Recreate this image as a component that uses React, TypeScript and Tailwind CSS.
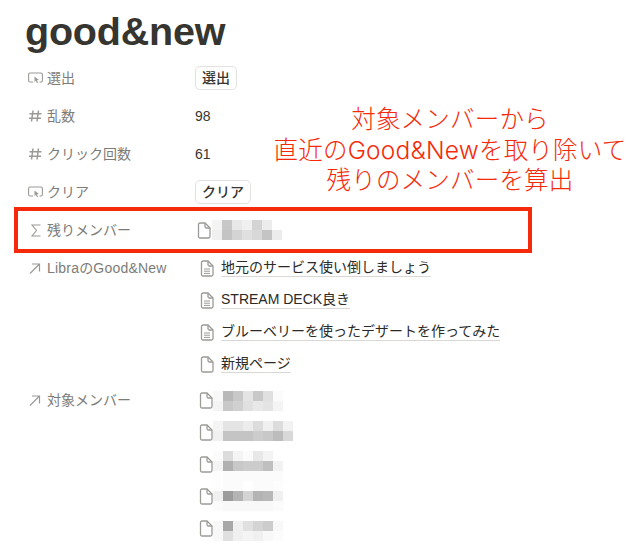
import { ReactNode } from 'react';

const FONT = "font-['Liberation_Sans','Noto_Sans_CJK_JP',sans-serif]";

// mosaic data: grey level per 10px cell, as seen in the screenshot
const remaining = [
  ['f4', 'c8', 'e8', 'f0', 'd4', 'ec', 'ff'],
  ['f0', 'c4', 'd4', 'e0', 'd8', 'c4', 'ec'],
];
const members = [
  {
    shift: 'translate-y-[1px]',
    cells: [
      ['f8', 'b8', 'c8', 'e4', 'c8', 'e0', 'fb'],
      ['f4', 'c8', 'd0', 'e0', 'e8', 'e4', 'f4'],
    ],
  },
  {
    shift: '-translate-y-[1px]',
    cells: [
      ['f4', 'e4', 'e4', 'ec', 'dc', 'f0', 'dc', 'f2'],
      ['f0', 'c4', 'c4', 'c4', 'cc', 'c8', 'bc', 'd8'],
    ],
  },
  {
    shift: 'translate-y-[2px]',
    cells: [
      ['fb', 'dc', 'f4', 'fb', 'e8', 'f4', 'ff'],
      ['f4', 'b0', 'c8', 'cc', 'cc', 'c0', 'f2'],
      ['fd', 'fb', 'fb', 'fb', 'fb', 'fb', 'fb'],
    ],
  },
  {
    shift: '',
    cells: [
      ['fd', 'fb', 'fb', 'ff', 'fb', 'fb', 'fd'],
      ['f0', '9c', 'b4', 'd4', 'b4', 'b8', 'f0'],
      ['fb', 'f8', 'f8', 'f8', 'f8', 'f8', 'fb'],
    ],
  },
  {
    shift: 'translate-y-[3px]',
    cells: [
      ['f8', 'a8', 'f0', 'e0', 'd4', 'cc', 'f8'],
      ['f8', 'e0', 'f0', 'f4', 'f0', 'f8', 'fc'],
    ],
  },
];

function Mosaic({ cells, className }: { cells: string[][]; className?: string }) {
  return (
    <div className={`flex flex-col ${className ?? ''}`}>
      {cells.map((row, i) => (
        <div key={i} className="flex">
          {row.map((c, j) => (
            <div key={j} className="w-[10px] h-[10px]" style={{ backgroundColor: `#${c}${c}${c}` }} />
          ))}
        </div>
      ))}
    </div>
  );
}

function PageIcon({ lines }: { lines?: boolean }) {
  return (
    <svg width="14" height="17" viewBox="0 0 14 17" fill="none" stroke="#9b9a97" strokeWidth="1.3" className="shrink-0">
      <path d="M3 1h5l5 5v8.500A1.500 1.500 0 0 1 11.500 16h-8.500A1.500 1.500 0 0 1 1.500 14.500v-12A1.500 1.500 0 0 1 3 1z" />
      <path d="M8 1v3.500A1.500 1.500 0 0 0 9.500 6H13" />
      {lines && <path d="M4 9h6M4 11.200h6M4 13.400h6" strokeWidth="1" />}
    </svg>
  );
}

function ButtonIcon() {
  return (
    <svg width="15" height="12" viewBox="0 0 15 12" fill="none" stroke="#9b9a97" strokeWidth="1.1">
      <path d="M5 10H2A1.500 1.500 0 0 1 .600 8.500v-6A1.500 1.500 0 0 1 2 1h11a1.500 1.500 0 0 1 1.400 1.500v6A1.500 1.500 0 0 1 13 10h-1.500" />
      <path d="M6.500 4.500l4.500 3.500-2 .3 1 2.500-1 .5-1.100-2.500-1.400 1.300z" fill="#9b9a97" stroke="none" />
    </svg>
  );
}

function Hash() {
  return (
    <svg width="14" height="14" viewBox="0 0 14 14" fill="none" stroke="#9b9a97" strokeWidth="1.500">
      <path d="M5 1.500 3.500 12.500M10.500 1.500 9 12.500M1.500 4.800h12M1 9.200h12" />
    </svg>
  );
}

function Sigma() {
  return (
    <svg width="12" height="13" viewBox="0 0 12 13" fill="none" stroke="#9b9a97" strokeWidth="1.100" className="ml-[2px]">
      <path d="M10.500 1H2l4.500 5.500L2 12h8.500" />
    </svg>
  );
}

function Arrow() {
  return (
    <svg width="13" height="13" viewBox="0 0 13 13" fill="none" stroke="#9b9a97" strokeWidth="1.200">
      <path d="M2 11.500 11.500 2M4 2h7.500v7.500" />
    </svg>
  );
}

function Label({ icon, children }: { icon: ReactNode; children: ReactNode }) {
  return (
    <div className="w-[167px] shrink-0 flex items-center text-[14px] text-[#7d7c78]">
      <span className="w-[19px] flex items-center">{icon}</span>
      {children}
    </div>
  );
}

function Row({ icon, label, children }: { icon: ReactNode; label: string; children: ReactNode }) {
  return (
    <div className="h-[38px] flex items-center">
      <Label icon={icon}>{label}</Label>
      {children}
    </div>
  );
}

function ActionButton({ children }: { children: ReactNode }) {
  return (
    <span className="h-[24px] px-[6px] flex items-center rounded-[5px] border border-[#e3e2e0] text-[14px] font-medium text-[#37352f]">
      {children}
    </span>
  );
}

function PageLink({ text, lines }: { text: string; lines?: boolean }) {
  return (
    <div className="h-[32px] flex items-center gap-[7px] pl-[5px]">
      <PageIcon lines={lines} />
      <span className="text-[14px] leading-[17px] text-[#2b2a26] border-b border-[#d9d8d5]">{text}</span>
    </div>
  );
}

export default function App() {
  return (
    <div className={`${FONT} relative w-[644px] h-[553px] overflow-hidden bg-white pl-[28px] pt-[8px]`}>
      <h1 className="-ml-[3px] text-[39.500px] leading-[46px] font-bold text-[#37352f] tracking-[-0.2px]">good&amp;new</h1>
      <div className="mt-[5px]">
        <Row icon={<ButtonIcon />} label="選出">
          <ActionButton>選出</ActionButton>
        </Row>
        <Row icon={<Hash />} label="乱数">
          <span className="text-[14px] text-[#37352f]">98</span>
        </Row>
        <Row icon={<Hash />} label="クリック回数">
          <span className="text-[14px] text-[#37352f]">61</span>
        </Row>
        <Row icon={<ButtonIcon />} label="クリア">
          <ActionButton>クリア</ActionButton>
        </Row>
        <Row icon={<Sigma />} label="残りメンバー">
          <div className="flex items-center gap-[1px] pl-[2px]">
            <PageIcon />
            <Mosaic cells={remaining} />
          </div>
        </Row>
        <div className="flex mt-[3px]">
          <div className="h-[32px] flex items-center self-start">
            <Label icon={<Arrow />}>
              <span className="tracking-[0.2px]">LibraのGood&amp;New</span>
            </Label>
          </div>
          <div>
            <PageLink lines text="地元のサービス使い倒しましょう" />
            <PageLink lines text="STREAM DECK良き" />
            <PageLink lines text="ブルーベリーを使ったデザートを作ってみた" />
            <PageLink text="新規ページ" />
          </div>
        </div>
        <div className="flex mt-[4px]">
          <div className="h-[32px] flex items-center self-start">
            <Label icon={<Arrow />}>対象メンバー</Label>
          </div>
          <div>
            {members.map((m, i) => (
              <div key={i} className="h-[32px] flex items-center pl-[4px]">
                <PageIcon />
                <Mosaic cells={m.cells} className={m.shift} />
              </div>
            ))}
          </div>
        </div>
      </div>

      {/* annotation overlay */}
      <div className="absolute left-[14px] top-[207px] w-[518px] h-[46px] border-[4px] border-[#f52a0a]" />
      <div className="absolute left-[260px] top-[105px] w-[380px] text-center text-[24.500px] font-light tracking-[0.2px] leading-[30px] text-[#f52a0a]">
        対象メンバーから
        <br />
        直近の<span className="font-['Inter',sans-serif]">Good&amp;New</span>を取り除いて
        <br />
        残りのメンバーを算出
      </div>
    </div>
  );
}
